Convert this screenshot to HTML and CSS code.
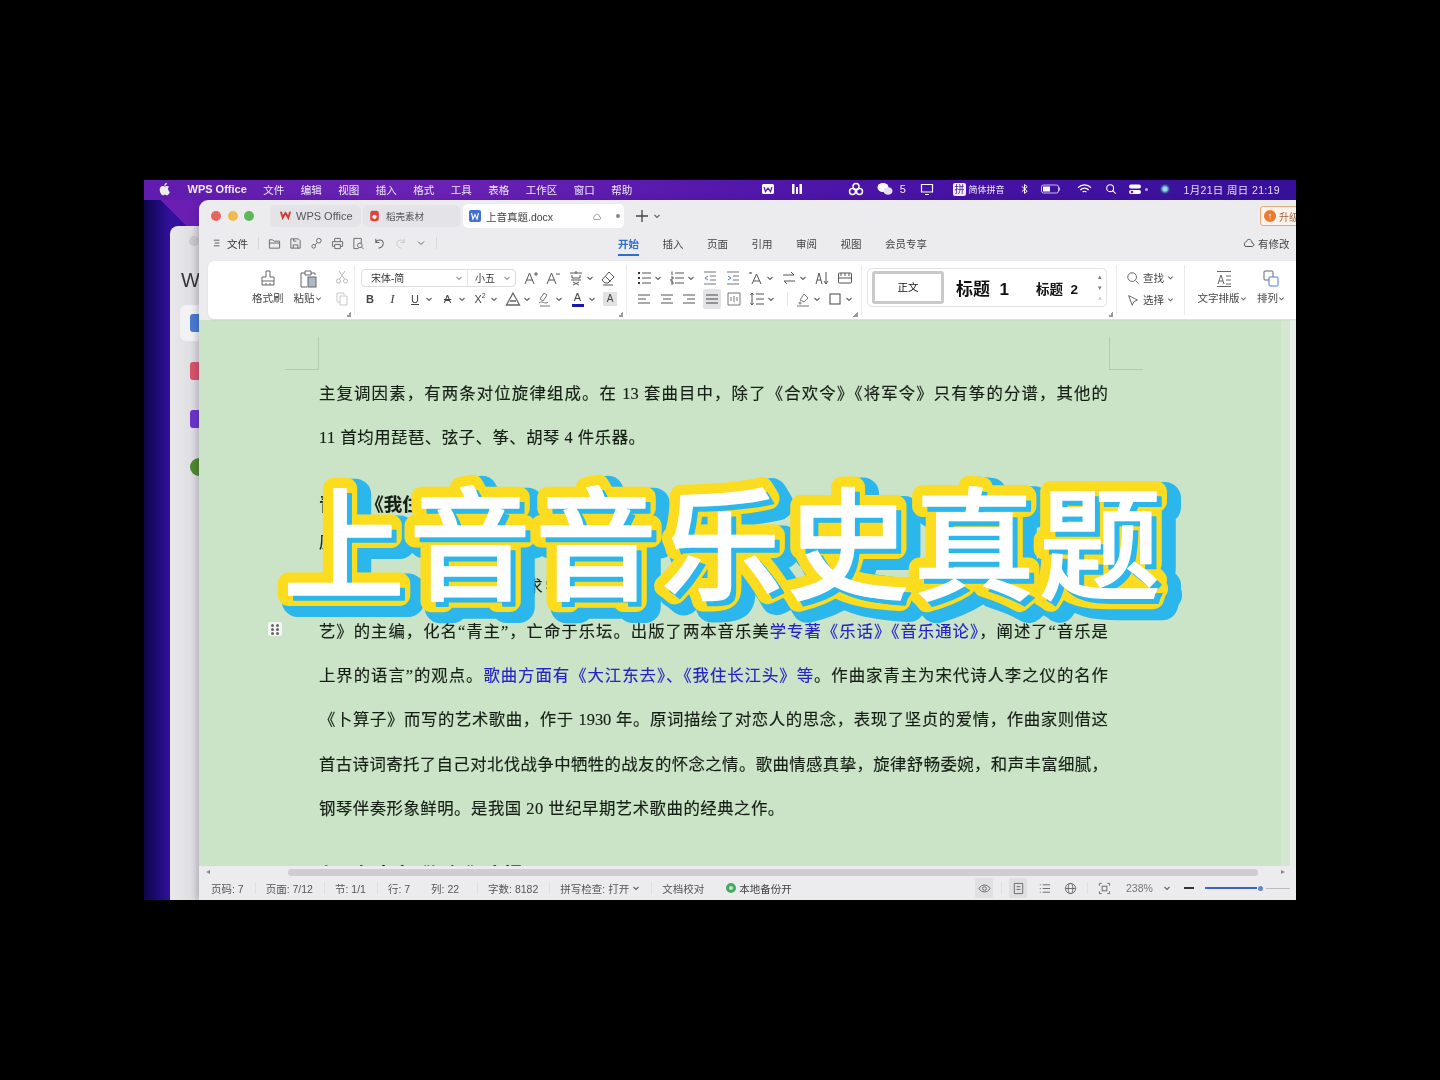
FILE: index.html
```html
<!DOCTYPE html>
<html lang="zh-CN">
<head>
<meta charset="utf-8">
<title>上音音乐史真题</title>
<link rel="stylesheet" href="styles.css">
</head>
<body>
<svg class="sprite" aria-hidden="true">
  <defs>
    <symbol id="caret" viewBox="0 0 8 8"><path d="M1.500 3 4 5.500 6.500 3" fill="none" stroke="currentColor" stroke-width="1.200"/></symbol>
    <text id="title-text" class="title-text" x="0" y="0">上音音乐史真题</text>
  </defs>
</svg>
<main class="screen">
  <div class="glow"></div>

  <header class="menubar">
    <svg class="apple" viewBox="0 0 14 16"><path d="M10.300 8.400c0-1.700 1.400-2.500 1.500-2.600-.8-1.200-2.100-1.400-2.500-1.400-1.100-.1-2.100.6-2.600.6s-1.400-.6-2.300-.6C3.200 4.400 2 5.100 1.400 6.200c-1.300 2.200-.3 5.500.9 7.300.6.900 1.300 1.900 2.300 1.800.9 0 1.300-.6 2.400-.6s1.400.6 2.400.6 1.600-.9 2.200-1.800c.7-1 1-2 1-2.100-.1 0-1.800-.7-1.800-3zM8.500 3.100c.5-.6.900-1.500.8-2.400-.8 0-1.700.5-2.300 1.200-.5.500-.9 1.400-.8 2.300.9 0 1.800-.5 2.300-1.100z" fill="currentColor"/></svg>
    <b class="m-app">WPS Office</b>
    <span>文件</span><span>编辑</span><span>视图</span><span>插入</span><span>格式</span><span>工具</span><span>表格</span><span>工作区</span><span>窗口</span><span>帮助</span>
    <svg class="mi m-w" viewBox="0 0 14 14"><rect x="1" y="2" width="12" height="10" rx="1.500" fill="#fff"/><path d="M3 5l1.500 4.500L7 6l2.500 3.500L11 5" fill="none" stroke="#5a22a8" stroke-width="1.300"/></svg>
    <svg class="mi m-m" viewBox="0 0 14 14"><path d="M2 2v10h2.500V2zM6 5v7h2V5zM9.500 2v10H12V2z" fill="#fff"/></svg>
    <svg class="mi m-b" viewBox="0 0 16 14"><g fill="none" stroke="#fff" stroke-width="1.500"><circle cx="8" cy="4.500" r="3"/><circle cx="4.500" cy="9.500" r="3"/><circle cx="11.500" cy="9.500" r="3"/></g></svg>
    <svg class="mi m-wx" viewBox="0 0 16 14"><ellipse cx="6" cy="5.500" rx="5.500" ry="4.500" fill="#fff"/><ellipse cx="11" cy="9" rx="4.500" ry="3.800" fill="#e6e0f5"/></svg>
    <span class="m-five">5</span>
    <svg class="mi m-mon" viewBox="0 0 14 14"><path d="M1.500 2.500h11v7.500h-11zM5 12.500h4" fill="none" stroke="#fff" stroke-width="1.200"/></svg>
    <span class="m-pin">拼</span><span class="m-ime">简体拼音</span>
    <svg class="mi m-bt" viewBox="0 0 10 14"><path d="M2 4l6 5.500L5 12V2l3 2.500L2 10" fill="none" stroke="#fff" stroke-width="1.100"/></svg>
    <svg class="mi m-bat" viewBox="0 0 20 12"><rect x=".5" y="2" width="17" height="8" rx="2" fill="none" stroke="#cbbde8"/><rect x="2" y="3.500" width="7" height="5" fill="#fff"/><path d="M18.500 4.500v3" stroke="#cbbde8"/></svg>
    <svg class="mi m-wifi" viewBox="0 0 16 12"><path d="M1 4.500c4-4 10-4 14 0M3.500 7c2.500-2.500 6.500-2.500 9 0M6 9.300c1-1 3-1 4 0" fill="none" stroke="#fff" stroke-width="1.400"/></svg>
    <svg class="mi m-s" viewBox="0 0 14 14"><circle cx="6" cy="6" r="4" fill="none" stroke="#fff" stroke-width="1.300"/><path d="M9 9l3.500 3.500" stroke="#fff" stroke-width="1.300"/></svg>
    <svg class="mi m-c" viewBox="0 0 14 14"><rect x="1" y="2.500" width="12" height="4" rx="2" fill="#fff"/><rect x="1" y="8" width="12" height="4" rx="2" fill="#fff"/><circle cx="4" cy="10" r="1.300" fill="#5a22a8"/></svg>
    <i class="m-dot"></i><i class="m-siri"></i>
    <span class="m-date">1月21日 周日 21:19</span>
  </header>

  <section class="back-window">
    <i class="back-light"></i>
    <div class="back-logo">W</div>
    <div class="back-item back-active"><i class="back-ic blue"></i></div>
    <div class="back-item"><i class="back-ic red"></i></div>
    <div class="back-item"><i class="back-ic violet"></i></div>
    <div class="back-item"><i class="back-ic green"></i></div>
  </section>

  <section class="window">
    <div class="titlebar">
      <i class="light red-l"></i><i class="light yel-l"></i><i class="light grn-l"></i>
      <div class="tab tab-wps">
        <svg class="tab-ic" viewBox="0 0 14 12"><path d="M1 1.500l2.800 9L7 4.500l3.200 6L13 1.500h-2.200l-.9 3.800L7 1 4.100 5.300 3.200 1.500z" fill="#d8352c"/></svg>
        <span>WPS Office</span>
      </div>
      <div class="tab tab-dk">
        <svg class="tab-ic" viewBox="0 0 12 14"><rect x="1" y="1" width="10" height="12" rx="2.500" fill="#e0453d"/><circle cx="6" cy="8" r="2.500" fill="#fff"/></svg>
        <span>稻壳素材</span>
      </div>
      <div class="tab tab-doc">
        <svg class="tab-ic w-doc" viewBox="0 0 12 12"><rect width="12" height="12" rx="2" fill="#3f6fd8"/><path d="M2.500 3l1.500 6L6 4.500 8 9l1.500-6" fill="none" stroke="#fff" stroke-width="1.100"/></svg>
        <span class="tab-name">上音真题.docx</span>
        <svg class="tab-cloud" viewBox="0 0 12 10"><path d="M3 8.500h6c2 0 2-3 0-3C9 2 5 1 4 4 2 3.500 1 8.500 3 8.500z" fill="none" stroke="#888"/></svg>
        <i class="tab-dot"></i>
      </div>
      <svg class="plus" viewBox="0 0 12 12"><path d="M6 0v12M0 6h12" stroke="#444" stroke-width="1.300"/></svg>
      <svg class="caret plus-c"><use href="#caret"/></svg>
      <div class="upgrade"><i class="up-ic">↑</i><span>升级</span></div>
    </div>

    <div class="toolbar">
      <svg class="q menu-ic" viewBox="0 0 10 10"><path d="M1 1.500h7M2 5h6M1 8.500h7" stroke="#444"/></svg>
      <span class="file">文件</span>
      <i class="q-sep"></i>
      <svg class="q" viewBox="0 0 14 14"><path d="M1.500 3v9h11V4.500H6.500L5 3zM1.500 6.500h11" fill="none" stroke="#666"/></svg>
      <svg class="q" viewBox="0 0 14 14"><path d="M2 2h8l2 2v8H2zM4.500 12V8.500h5V12M5 2v2.500h3" fill="none" stroke="#666"/></svg>
      <svg class="q" viewBox="0 0 14 14"><circle cx="4" cy="10" r="2" fill="none" stroke="#666"/><circle cx="9.500" cy="4" r="2.500" fill="none" stroke="#666"/><path d="M5.500 8.500 8 6" stroke="#666"/></svg>
      <svg class="q" viewBox="0 0 14 14"><path d="M4 5V1.500h6V5M4 10H1.500V5h11v5H10M4 8h6v4.500H4z" fill="none" stroke="#666"/></svg>
      <svg class="q" viewBox="0 0 14 14"><path d="M7 12.500H2v-11h8v5" fill="none" stroke="#666"/><circle cx="8.500" cy="9" r="2.500" fill="none" stroke="#666"/><path d="M10.500 11l2 2" stroke="#666"/></svg>
      <svg class="q" viewBox="0 0 14 14"><path d="M3 6C4 2.500 11 2 11 7c0 3-2.500 4.500-5 5M3 2v4h4" fill="none" stroke="#666" stroke-width="1.100"/></svg>
      <svg class="q" viewBox="0 0 14 14"><path d="M11 6C10 2.500 3 2 3 7c0 3 2.500 4.500 5 5M11 2v4H7" fill="none" stroke="#c8c8c8"/></svg>
      <svg class="q q-c" viewBox="0 0 8 8"><path d="M1 2.500 4 5.500 7 2.500" fill="none" stroke="#666"/></svg>
      <i class="q-sep end"></i>
      <nav class="ribbon-tabs">
        <span class="active">开始</span><span>插入</span><span>页面</span><span>引用</span><span>审阅</span><span>视图</span><span>会员专享</span>
      </nav>
      <div class="changed">
        <svg viewBox="0 0 12 12"><path d="M3 9.500h6c2.500 0 2.500-3.500 0-3.500C9 2 4.500 1 3.500 4.500 1 4.500 .5 9.500 3 9.500z" fill="none" stroke="#555"/></svg>
        <span>有修改</span>
      </div>
    </div>

    <div class="ribbon">
      <div class="rb rb-clip">
        <div class="big-btn">
          <svg viewBox="0 0 20 20"><path d="M8 2h4v6h4v8H4V8h4zM4 12h12M8 16v-2M12 16v-2" fill="none" stroke="#666"/></svg>
          <span>格式刷</span>
        </div>
        <div class="big-btn paste">
          <svg viewBox="0 0 20 20"><path d="M7 4H3v14h6M13 4h4v2M7 2h6v4H7z" fill="none" stroke="#666"/><rect x="10" y="8" width="8" height="10" fill="#aeb7c4" stroke="#666"/></svg>
          <span>粘贴<svg class="caret"><use href="#caret"/></svg></span>
        </div>
        <div class="clip-col">
          <svg class="ic" viewBox="0 0 16 16"><circle cx="4.500" cy="12" r="2" fill="none" stroke="#bbb"/><circle cx="11.500" cy="12" r="2" fill="none" stroke="#bbb"/><path d="M5.500 10 11 2M10.500 10 5 2" stroke="#bbb"/></svg>
          <svg class="ic" viewBox="0 0 16 16"><path d="M10 4V2H3v9h3M6 5h7v9H6z" fill="none" stroke="#c8c8c8"/></svg>
        </div>
        <i class="expander"></i>
      </div>

      <div class="rb rb-font">
        <div class="row first">
          <div class="combo">
            <div class="combo-font">宋体-简<svg class="caret"><use href="#caret"/></svg></div>
            <div class="combo-size">小五<svg class="caret"><use href="#caret"/></svg></div>
          </div>
          <span class="tool"><svg class="ic" viewBox="0 0 16 16"><path d="M2 14 6.500 3 11 14M3.800 10h5.500M11 4h4M13 2v4" fill="none" stroke="#555"/></svg></span>
          <span class="tool"><svg class="ic" viewBox="0 0 16 16"><path d="M2 14 6.500 3 11 14M3.800 10h5.500M11 4h4" fill="none" stroke="#555"/></svg></span>
          <span class="tool"><svg class="ic" viewBox="0 0 16 16"><path d="M2 3h12M8 1v3M4 5v3h8V5M3 10h10M5 12l6 3M11 12l-6 3" fill="none" stroke="#555"/></svg><svg class="caret"><use href="#caret"/></svg></span>
          <span class="tool"><svg class="ic" viewBox="0 0 16 16"><path d="M2 10 9 2l5 5-6 6H5zM5.500 6.500l5 5M3 15h10" fill="none" stroke="#555"/></svg></span>
        </div>
        <div class="row">
          <span class="tool"><b class="glyph">B</b></span>
          <span class="tool"><i class="glyph thin">I</i></span>
          <span class="tool"><span class="glyph under">U</span><svg class="caret"><use href="#caret"/></svg></span>
          <span class="tool"><span class="glyph strike">A</span><svg class="caret"><use href="#caret"/></svg></span>
          <span class="tool"><span class="glyph">X<sup>2</sup></span><svg class="caret"><use href="#caret"/></svg></span>
          <span class="tool"><svg class="ic" viewBox="0 0 16 16"><path d="M1.500 14 8 2l6.500 12zM5 10h6" fill="none" stroke="#666" stroke-width="1.300"/></svg><svg class="caret"><use href="#caret"/></svg></span>
          <span class="tool"><svg class="ic" viewBox="0 0 16 16"><path d="M3 8l4-6 3 2-4 6zM2 12c3-3 6 2 9-1M3 15h10" fill="none" stroke="#777"/></svg><svg class="caret"><use href="#caret"/></svg></span>
          <span class="tool"><span class="glyph color-a">A</span><svg class="caret"><use href="#caret"/></svg></span>
          <span class="tool"><span class="glyph shade">A</span></span>
        </div>
        <i class="expander"></i>
      </div>

      <div class="rb rb-para">
        <div class="row first para-top">
          <span class="tool"><svg class="ic" viewBox="0 0 16 16"><path d="M6 3h9M6 8h9M6 13h9" stroke="#555"/><path d="M2 3h2M2 8h2M2 13h2" stroke="#333" stroke-width="2"/></svg><svg class="caret"><use href="#caret"/></svg></span>
          <span class="tool"><svg class="ic" viewBox="0 0 16 16"><path d="M6 3h9M6 8h9M6 13h9M3 1.500V5M2 7h2v2H2v2h2M2 12h2v2H2" fill="none" stroke="#555"/></svg><svg class="caret"><use href="#caret"/></svg></span>
          <span class="tool"><svg class="ic" viewBox="0 0 16 16"><path d="M2 2h12M8 6h6M8 10h6M2 14h12" stroke="#777"/><path d="M6 6 3 8l3 2" fill="none" stroke="#4a7bd0"/></svg></span>
          <span class="tool"><svg class="ic" viewBox="0 0 16 16"><path d="M2 2h12M8 6h6M8 10h6M2 14h12" stroke="#777"/><path d="M3 6l3 2-3 2" fill="none" stroke="#4a7bd0"/></svg></span>
          <span class="tool"><svg class="ic" viewBox="0 0 16 16"><path d="M4 14 8.500 4 13 14M5.500 11h6M2 3h2M2 2v2" fill="none" stroke="#555"/></svg><svg class="caret"><use href="#caret"/></svg></span>
          <span class="tool"><svg class="ic" viewBox="0 0 16 16"><path d="M2 5h11l-3-3M14 11H3l3 3" fill="none" stroke="#555"/></svg><svg class="caret"><use href="#caret"/></svg></span>
          <span class="tool"><svg class="ic" viewBox="0 0 16 16"><path d="M2 14 5 3l3 11M3 10h4M12 2v12M10 11l2 3 2-3" fill="none" stroke="#555"/></svg></span>
          <span class="tool"><svg class="ic" viewBox="0 0 16 16"><rect x="1.500" y="3" width="13" height="10" rx="1" fill="none" stroke="#555"/><path d="M1.500 8h13M4 3v3M8 3v3M12 3v3" stroke="#555"/></svg></span>
        </div>
        <div class="row">
          <span class="tool"><svg class="ic" viewBox="0 0 16 16"><path d="M2 4h12M2 8h8M2 12h12" stroke="#555"/></svg></span>
          <span class="tool"><svg class="ic" viewBox="0 0 16 16"><path d="M2 4h12M4 8h8M2 12h12" stroke="#555"/></svg></span>
          <span class="tool"><svg class="ic" viewBox="0 0 16 16"><path d="M2 4h12M6 8h8M2 12h12" stroke="#555"/></svg></span>
          <span class="tool on"><svg class="ic" viewBox="0 0 16 16"><path d="M2 4h12M2 8h12M2 12h12" stroke="#444"/></svg></span>
          <span class="tool"><svg class="ic" viewBox="0 0 16 16"><path d="M2 2h12M2 14h12M2 2v12M14 2v12M5 6v4M8 5v6M11 6v4" fill="none" stroke="#777"/></svg></span>
          <span class="tool"><svg class="ic" viewBox="0 0 16 16"><path d="M7 3h8M7 8h8M7 13h8M3 2v12M1.500 4 3 2l1.500 2M1.500 12 3 14l1.500-2" fill="none" stroke="#555"/></svg><svg class="caret"><use href="#caret"/></svg></span>
          <i class="row-sep"></i>
          <span class="tool"><svg class="ic" viewBox="0 0 16 16"><path d="M5 9l4-6 4 4-4 4zM2 15h12" fill="none" stroke="#777"/><circle cx="5" cy="12" r="1.500" fill="#999"/></svg><svg class="caret"><use href="#caret"/></svg></span>
          <span class="tool"><svg class="ic" viewBox="0 0 16 16"><rect x="3" y="3" width="10" height="10" fill="none" stroke="#444"/></svg><svg class="caret"><use href="#caret"/></svg></span>
        </div>
        <i class="expander"></i>
      </div>

      <div class="rb rb-style">
        <div class="style-box">
          <div class="style-normal">正文</div>
          <div class="style-h1">标题&nbsp; 1</div>
          <div class="style-h2">标题&nbsp; 2</div>
          <div class="style-arrows"><i>▴</i><i>▾</i><i>⩡</i></div>
        </div>
        <i class="expander"></i>
      </div>

      <div class="rb rb-find">
        <span class="find-item"><svg class="ic" viewBox="0 0 16 16"><circle cx="7" cy="7" r="5" fill="none" stroke="#555"/><path d="M11 11l3.500 3.500" stroke="#555"/></svg>查找<svg class="caret"><use href="#caret"/></svg></span>
        <span class="find-item"><svg class="ic" viewBox="0 0 16 16"><path d="M3 3l4 11 2-4 4-2z" fill="none" stroke="#555"/></svg>选择<svg class="caret"><use href="#caret"/></svg></span>
      </div>

      <div class="rb rb-arrange">
        <div class="big-btn layout">
          <svg viewBox="0 0 20 20"><path d="M3 2.500h14M4 15 7 6l3 9M5 12h4M12 7h5M12 11h5M12 15h5M3 17.500h14" fill="none" stroke="#666"/></svg>
          <span>文字排版<svg class="caret"><use href="#caret"/></svg></span>
        </div>
        <div class="big-btn arrange">
          <svg viewBox="0 0 20 20"><rect x="3" y="2" width="9" height="9" rx="1" fill="none" stroke="#666"/><rect x="8" y="8" width="9" height="9" rx="1" fill="#fff" stroke="#4a7bd0"/></svg>
          <span>排列<svg class="caret"><use href="#caret"/></svg></span>
        </div>
      </div>
    </div>

    <div class="doc">
      <i class="crop crop-l"></i><i class="crop crop-r"></i>
      <div class="page">
        <p class="ln just">主复调因素，有两条对位旋律组成。在 13 套曲目中，除了《合欢令》《将军令》只有筝的分谱，其他的</p>
        <p class="ln">11 首均用琵琶、弦子、筝、胡琴 4 件乐器。</p>
        <h3 class="head">青主：《我住长江头》</h3>
        <p class="ln just">原词出自宋代词人李之仪的《卜算子》，曲作者青主，原名廖尚果，早年参加革命活动，</p>
        <p class="ln just">青主原名廖尚果，曾留德求学，回国后曾任上海国立音乐院教务主任，并担任音乐艺术杂志《乐</p>
        <p class="ln just">艺》的主编，化名“青主”，亡命于乐坛。出版了两本音乐美<span class="blue">学专著《乐话》《音乐通论》</span>，阐述了“音乐是</p>
        <p class="ln just">上界的语言”的观点。<span class="blue">歌曲方面有《大江东去》、《我住长江头》等</span>。作曲家青主为宋代诗人李之仪的名作</p>
        <p class="ln just">《卜算子》而写的艺术歌曲，作于 1930 年。原词描绘了对恋人的思念，表现了坚贞的爱情，作曲家则借这</p>
        <p class="ln just">首古诗词寄托了自己对北伐战争中牺牲的战友的怀念之情。歌曲情感真挚，旋律舒畅委婉，和声丰富细腻，</p>
        <p class="ln">钢琴伴奏形象鲜明。是我国 20 世纪早期艺术歌曲的经典之作。</p>
        <h3 class="head tail">七、何占豪《梁祝》小提琴</h3>
      </div>
      <div class="vscroll"></div>
      <div class="handle"><i></i><i></i><i></i><i></i><i></i><i></i></div>
    </div>

    <div class="hscroll">
      <i class="arrow-l"></i><div class="thumb"></div><i class="arrow-r"></i>
    </div>

    <footer class="status">
      <span>页码: 7</span><i class="s-sep"></i>
      <span>页面: 7/12</span><i class="s-sep"></i>
      <span>节: 1/1</span><i class="s-sep"></i>
      <span>行: 7</span><span class="s-col">列: 22</span><i class="s-sep wide"></i>
      <span>字数: 8182</span><i class="s-sep"></i>
      <span>拼写检查: 打开</span><svg class="caret s-caret"><use href="#caret"/></svg><i class="s-sep"></i>
      <span>文档校对</span><i class="s-sep clear"></i>
      <i class="s-dot"></i><span class="s-backup">本地备份开</span>
      <div class="s-right">
        <span class="v-btn on"><svg viewBox="0 0 14 14"><path d="M1 7c3-5 9-5 12 0-3 5-9 5-12 0z" fill="none" stroke="#666"/><circle cx="7" cy="7" r="2" fill="none" stroke="#666"/></svg></span>
        <i class="s-sep thin"></i>
        <span class="v-btn on"><svg viewBox="0 0 14 14"><path d="M2.500 1.500h9v11h-9zM5 5h4M5 8h4" fill="none" stroke="#666"/></svg></span>
        <span class="v-btn"><svg viewBox="0 0 14 14"><path d="M5 3h8M5 7h8M5 11h8M2 3h1M2 7h1M2 11h1" stroke="#666"/></svg></span>
        <span class="v-btn"><svg viewBox="0 0 14 14"><circle cx="7" cy="7" r="5.500" fill="none" stroke="#666"/><ellipse cx="7" cy="7" rx="2.500" ry="5.500" fill="none" stroke="#666"/><path d="M1.500 7h11" stroke="#666"/></svg></span>
        <i class="s-sep thin"></i>
        <span class="v-btn"><svg viewBox="0 0 14 14"><path d="M1.500 4V1.500H4M10 1.500h2.500V4M12.500 10v2.500H10M4 12.500H1.500V10" fill="none" stroke="#666"/><rect x="4.500" y="4.500" width="5" height="5" fill="none" stroke="#666"/></svg></span>
        <span class="zoom-val">238%</span>
        <svg class="caret z-caret"><use href="#caret"/></svg>
        <i class="minus"></i>
        <div class="slider"><i class="fill"></i><i class="knob"></i><i class="rest"></i></div>
      </div>
    </footer>
  </section>

  <svg class="title-art" viewBox="0 0 1000 180" role="img" aria-label="上音音乐史真题">
    <use href="#title-text" class="t-outer" x="9" y="131"/>
    <use href="#title-text" class="t-yellow" x="0" y="125"/>
    <use href="#title-text" class="t-shadow" x="5" y="130"/>
    <use href="#title-text" class="t-white" x="0" y="125"/>
  </svg>
</main>
</body>
</html>
```

FILE: styles.css
```css
* { box-sizing: border-box; }
html, body { margin: 0; background: #000; }
body {
  width: 1440px;
  height: 1080px;
  padding: 180px 144px;
  overflow: hidden;
  font-family: "Liberation Sans", "Noto Sans CJK SC", sans-serif;
}
.sprite { position: absolute; width: 0; height: 0; }
i { font-style: normal; display: block; }
svg { display: block; flex: none; }

.screen {
  position: relative;
  width: 1152px;
  height: 720px;
  overflow: hidden;
  filter: blur(.45px);
  background: linear-gradient(90deg, #0e0648 0, #1d0b78 14px, #34109c 26px, #3a12a4 60px);
}
.glow {
  position: absolute;
  left: 14px;
  top: 20px;
  width: 50px;
  height: 46px;
  background: linear-gradient(225deg, #6b1fb2 50%, transparent 50%);
}

/* macOS menu bar */
.menubar {
  position: relative;
  height: 20px;
  display: flex;
  align-items: center;
  padding: 0 0 2px 15px;
  gap: 16.5px;
  color: #f1ebfb;
  font-size: 10.5px;
  background: linear-gradient(90deg, #5f1cae 0, #6a22b4 25%, #4c14a8 60%, #36109a 100%);
}
.menubar span, .m-app { white-space: nowrap; }
.apple { width: 12px; height: 14px; color: #eee; }
.m-app { font-size: 11px; flex: none; }
.mi { width: 14px; height: 14px; }
.menubar .m-w { margin-left: 112px; }
.menubar .m-m { margin-left: -1px; }
.menubar .m-b { margin-left: 27px; width: 16px; }
.menubar .m-wx { margin-left: -3px; width: 16px; }
.menubar .m-five { margin-left: -10px; font-size: 11px; }
.menubar .m-mon { margin-left: -2px; }
.menubar .m-pin { margin-left: 2px; background: #f3eefb; color: #4a18a2; font-size: 10px; width: 13px; height: 13px; line-height: 13px; text-align: center; border-radius: 2px; }
.menubar .m-ime { margin-left: -14px; font-size: 9px; }
.menubar .m-bt { margin-left: -1px; width: 9px; }
.menubar .m-bat { margin-left: -4px; width: 20px; }
.menubar .m-wifi { margin-left: -1px; width: 15px; }
.menubar .m-s { margin-left: -3px; width: 12px; }
.menubar .m-c { margin-left: -6px; }
.m-dot { width: 3px; height: 3px; margin-left: -13px; border-radius: 50%; background: #b9a6e8; }
.m-siri { width: 10px; height: 10px; margin-left: -5px; border-radius: 50%; background: radial-gradient(circle, #8fe0e8 0 25%, #3a3f9a 60%, #302080); }
.menubar .m-date { margin-left: -3px; font-size: 10.5px; letter-spacing: .35px; color: #e6dcf6; }

/* back window, behind the document window */
.back-window {
  position: absolute;
  left: 26px;
  top: 46px;
  width: 200px;
  bottom: 0;
  padding: 10px 10px 0;
  border-radius: 8px 0 0 0;
  background: linear-gradient(90deg, #e9e8ea, #dcdbdf 28px);
}
.back-light { width: 10px; height: 10px; margin-left: 9px; border-radius: 50%; background: #c9c9cb; }
.back-logo { margin: 22px 0 13px 1px; font-size: 20px; line-height: 24px; color: #333; }
.back-item { height: 36px; margin-bottom: 12px; padding: 9px 0 0 10px; border-radius: 6px 0 0 6px; }
.back-active { background: #f2f2f4; }
.back-ic { width: 18px; height: 18px; border-radius: 3px; }
.blue { color: #2323c8; }
.back-ic.blue { background: #4a7ad2; }
.back-ic.red { background: #d8526a; }
.back-ic.violet { background: #6a35c8; }
.back-ic.green { background: #4d8a2a; border-radius: 50%; }

/* document window */
.window {
  position: absolute;
  left: 55px;
  top: 20px;
  width: 1097px;
  height: 700px;
  display: flex;
  flex-direction: column;
  border-radius: 9px 0 0 0;
  background: #ecebee;
  color: #444;
  font-size: 10.5px;
  box-shadow: -2px 0 6px rgba(40, 30, 70, .25);
}
.titlebar {
  height: 32px;
  flex: none;
  display: flex;
  align-items: center;
  padding-left: 12px;
}
.titlebar > * { flex: none; }
.light { width: 10px; height: 10px; margin-right: 6.500px; border-radius: 50%; }
.red-l { background: #e8645c; }
.yel-l { background: #eebc4c; }
.grn-l { background: #5cb85c; margin-right: 0; }
.tab {
  height: 22px;
  display: flex;
  align-items: center;
  border-radius: 5px;
  font-size: 11px;
  color: #555;
}
.tab-ic { width: 13px; height: 12px; }
.tab-wps { width: 91px; margin-left: 16px; padding-left: 9px; gap: 4px; background: #e4e3e7; }
.tab-dk { width: 97px; margin-left: 2px; padding-left: 5px; gap: 5px; background: #e4e3e7; font-size: 9.500px; }
.tab-doc { width: 161px; height: 24px; margin-left: 3px; padding-left: 6px; gap: 5px; background: #fff; color: #444; font-size: 10.5px; }
.tab-name { width: 101px; }
.tab-cloud { width: 10px; height: 9px; }
.tab-dot { width: 4px; height: 4px; margin-left: 9px; border-radius: 50%; background: #888; }
.w-doc { width: 12px; }
.plus { width: 12px; height: 12px; margin-left: 12px; }
.caret { width: 8px; height: 8px; color: #666; }
.plus-c { margin-left: 5px; }
.upgrade {
  display: flex;
  align-items: center;
  gap: 3px;
  height: 20px;
  width: 70px;
  margin-left: 599px;
  padding-left: 3px;
  border: 1px solid #e8a77c;
  border-radius: 3px;
  background: #fdf3ec;
  color: #a2643c;
  font-size: 10px;
}
.up-ic { width: 12px; height: 12px; line-height: 12px; text-align: center; border-radius: 50%; background: #ec7a2e; color: #fff; font-size: 9px; font-weight: 700; }

.toolbar {
  height: 29px;
  flex: none;
  display: flex;
  align-items: center;
  padding: 0 0 7px 14px;
  font-size: 10.5px;
}
.q { width: 13px; height: 13px; margin-right: 8px; }
.menu-ic { width: 8px; height: 8px; margin-right: 6px; }
.q-c { width: 8px; height: 8px; margin-left: 2px; }
.file { color: #333; font-size: 10.5px; }
.q-sep { width: 1px; height: 12px; margin: 0 9px 0 10px; background: #d8d7da; }
.q-sep.end { margin: 0 0 0 3px; }
.ribbon-tabs {
  display: flex;
  gap: 23.5px;
  margin-left: 181px;
}
.ribbon-tabs span { position: relative; color: #444; white-space: nowrap; }
.ribbon-tabs .active { color: #2f6fd0; font-weight: 700; }
.ribbon-tabs .active::after {
  content: "";
  position: absolute;
  left: 0;
  right: 0;
  bottom: -5px;
  height: 2px;
  background: #2f6fd0;
}
.changed { display: flex; align-items: center; gap: 3px; margin-left: 316px; }
.changed svg { width: 12px; height: 12px; }

.ribbon {
  height: 58px;
  flex: none;
  margin-left: 9px;
  display: flex;
  background: #fff;
  border-radius: 6px 0 0 6px;
  box-shadow: 0 1px 2px rgba(0, 0, 0, .08);
  position: relative;
  z-index: 1;
}
.rb {
  position: relative;
  flex: none;
  height: 100%;
}
.rb + .rb::before {
  content: "";
  position: absolute;
  left: 0;
  top: 4px;
  bottom: 4px;
  width: 1px;
  background: #eaeaec;
}
.expander {
  position: absolute;
  right: 3px;
  bottom: 2px;
  width: 5px;
  height: 5px;
  background: linear-gradient(135deg, transparent 50%, #999 50%);
}
.ic { width: 16px; height: 16px; }
.rb-clip { width: 146px; display: flex; padding-left: 44px; }
.big-btn {
  display: flex;
  flex-direction: column;
  align-items: center;
  padding-top: 8px;
  gap: 2px;
  color: #444;
  font-size: 10.5px;
  white-space: nowrap;
}
.big-btn > svg { width: 20px; height: 20px; }
.big-btn span { display: flex; align-items: center; line-height: 14px; }
.big-btn .caret { width: 7px; height: 7px; }
.paste { margin-left: 10px; }
.clip-col { display: flex; flex-direction: column; gap: 6px; margin-left: 12px; padding-top: 8px; }

.rb-font { width: 272px; padding: 8px 0 0 8px; }
.row { display: flex; align-items: center; height: 16px; gap: 6.5px; }
.row.first { height: 17px; margin-bottom: 5px; gap: 6.5px; }
.tool { display: flex; align-items: center; gap: 2px; height: 16px; position: relative; }
.tool .caret { width: 8px; height: 8px; }
.tool.on::before {
  content: "";
  position: absolute;
  inset: -2px -1px;
  border-radius: 2px;
  background: #e3e3e5;
}
.tool.on .ic { position: relative; }
.combo {
  width: 155px;
  height: 18px;
  display: flex;
  border: 1px solid #dcdcde;
  border-radius: 4px;
  margin-left: -1px;
  font-size: 10px;
  color: #333;
}
.combo > div { display: flex; align-items: center; justify-content: space-between; padding: 0 4px 0 9px; }
.combo .caret { color: #999; }
.combo-font { width: 106px; border-right: 1px solid #e6e6e8; }
.combo-size { flex: 1; padding-left: 7px !important; }
.glyph {
  display: block;
  width: 16px;
  text-align: center;
  line-height: 16px;
  font-size: 11px;
  color: #444;
  text-decoration: none;
}
.glyph sup { font-size: 7px; line-height: 0; }
.thin { font-family: "Liberation Serif", serif; font-style: italic; font-size: 13px; }
.under { text-decoration: underline; }
.strike { text-decoration: line-through; }
.color-a { position: relative; line-height: 13px; height: 16px; }
.color-a::after { content: ""; position: absolute; left: 2px; right: 2px; bottom: 0; height: 3px; background: #1717b0; }
.shade { width: 14px; height: 14px; line-height: 14px; margin-left: 1px; background: #e2e2e4; font-size: 10px; }

.rb-para { width: 235px; padding: 8px 0 0 10px; }
.para-top { gap: 7px !important; }
.row-sep { width: 1px; height: 14px; margin-left: 6px; background: #e4e4e6; }

.rb-style { width: 255px; padding: 7px 0 0 6px; }
.style-box {
  width: 240px;
  height: 39px;
  display: flex;
  align-items: center;
  padding-left: 4px;
  border: 1px solid #e2e2e4;
  border-radius: 5px;
  color: #111;
  position: relative;
}
.style-normal {
  width: 72px;
  height: 33px;
  line-height: 27px;
  text-align: center;
  border: 3px solid #c9c9cb;
  border-radius: 3px;
  font-size: 10.5px;
  font-family: "Liberation Serif", "Noto Sans CJK SC", serif;
}
.style-h1 { margin-left: 12px; font-size: 17px; font-weight: 700; white-space: nowrap; color: #111; }
.style-h2 { margin-left: 27px; font-size: 13.500px; font-weight: 700; white-space: nowrap; color: #111; }
.style-arrows {
  position: absolute;
  right: 2px;
  top: 2px;
  width: 8px;
  display: flex;
  flex-direction: column;
  align-items: center;
  font-size: 7px;
  line-height: 11px;
  color: #777;
}

.rb-find {
  width: 68px;
  padding: 9px 0 0 10px;
  display: flex;
  flex-direction: column;
  gap: 7px;
}
.find-item { display: flex; align-items: center; gap: 3px; height: 15px; white-space: nowrap; color: #444; }
.find-item .ic { width: 14px; height: 14px; }
.find-item .caret { width: 7px; height: 7px; }

.rb-arrange { flex: 1; display: flex; padding-left: 12px; gap: 8px; }
.layout { width: 52px; }
.arrange { width: 30px; }
.layout > svg { margin-left: 4px; }

.doc {
  flex: 1;
  min-height: 0;
  position: relative;
  overflow: hidden;
  display: flex;
  margin-top: 1px;
  background: #cbe3c7;
}
.page {
  flex: none;
  width: 789px;
  margin-left: 120px;
  padding-top: 52px;
  font-family: "Liberation Serif", "Noto Sans CJK SC", serif;
  font-size: 16.400px;
  color: #161f16;
  -webkit-text-stroke: .15px currentColor;
}
.ln { margin: 0; line-height: 44.4px; height: 44.4px; white-space: nowrap; letter-spacing: .5px; }
.ln.just { letter-spacing: 0; white-space: normal; overflow: hidden; text-align: justify; text-align-last: justify; text-justify: inter-character; }
.head { margin: 28px 0 0; height: 32px; line-height: 32px; font-size: 18.500px; font-weight: 700; white-space: nowrap; }
.head.tail { margin-top: 27px; }
.vscroll { position: absolute; right: 0; top: 0; bottom: 0; width: 15px; background: linear-gradient(90deg, #d5e7d2 0 9px, #e8efe6 9px); }
.crop { position: absolute; width: 34px; height: 33px; top: 17px; }
.crop-l { left: 86px; border-right: 1px solid #b4c9b0; border-bottom: 1px solid #b4c9b0; }
.crop-r { left: 910px; border-left: 1px solid #b4c9b0; border-bottom: 1px solid #b4c9b0; }
.handle {
  position: absolute;
  left: 69px;
  top: 302px;
  width: 14px;
  height: 14px;
  display: grid;
  grid-template-columns: repeat(2, 3px);
  gap: 1px 2px;
  justify-content: center;
  align-content: center;
  background: #f3f6f2;
  border-radius: 2px;
}
.handle i { width: 3px; height: 3px; border-radius: 50%; background: #666; }

.hscroll {
  height: 12px;
  flex: none;
  position: relative;
  background: #ecebee;
  display: flex;
  align-items: center;
  padding-left: 89px;
}
.thumb { width: 970px; height: 7px; border-radius: 3px; background: #cfcdd1; }
.arrow-l, .arrow-r { position: absolute; top: 4px; width: 0; height: 0; border-top: 2.5px solid transparent; border-bottom: 2.5px solid transparent; }
.arrow-l { left: 7px; border-right: 4px solid #888; }
.arrow-r { left: 1082px; border-left: 4px solid #888; }

.status {
  height: 22px;
  flex: none;
  display: flex;
  align-items: center;
  padding: 0 0 2px 12px;
  font-size: 10.5px;
  color: #555;
  white-space: nowrap;
}
.s-sep { width: 1px; height: 12px; margin: 0 10px 0 11px; background: #e0dfe2; }
.s-sep.wide { margin-left: 18px; }
.s-sep.clear { background: transparent; margin-right: 10px; }
.s-sep.thin { margin: 0 7px 0 0; }
.s-col { margin-left: 21px; }
.s-caret { margin-left: 3px; width: 8px; height: 8px; }
.s-dot { width: 10px; height: 10px; margin: 0 3px 0 0; border: 3px solid #4aa862; border-radius: 50%; background: #bfe6c8; }
.s-backup { color: #444; }
.s-right { margin-left: auto; display: flex; align-items: center; padding-right: 6px; }
.v-btn { width: 18px; height: 20px; display: flex; align-items: center; justify-content: center; margin-right: 8px; }
.v-btn.on { background: #e0dfe2; border-radius: 2px; }
.v-btn svg { width: 13px; height: 13px; }
.zoom-val { margin-left: 5px; color: #777; width: 30px; }
.z-caret { margin-left: 7px; }
.minus { width: 10px; height: 2px; margin-left: 13px; background: #333; }
.slider { width: 85px; margin-left: 11px; display: flex; align-items: center; }
.slider .fill { width: 52px; height: 2px; background: #3f62c8; }
.slider .knob { width: 5px; height: 5px; margin-left: 1px; border-radius: 50%; background: #6a86c4; }
.slider .rest { flex: 1; height: 1px; margin-left: 3px; background: #bbb; }

/* caption over the recording */
.title-art {
  position: absolute;
  left: 139px;
  top: 285px;
  width: 1000px;
  height: 180px;
  overflow: visible;
}
.title-text {
  font-family: "Noto Sans CJK SC", sans-serif;
  font-size: 122px;
  font-weight: 500;
  letter-spacing: 4px;
  stroke-linejoin: round;
  stroke-linecap: round;
}
.t-outer { fill: #2bb7ec; stroke: #2bb7ec; stroke-width: 32px; stroke-linejoin: round; }
.t-yellow { fill: #fbdc1e; stroke: #fbdc1e; stroke-width: 22px; stroke-linejoin: round; }
.t-shadow { fill: #2bb7ec; stroke: #2bb7ec; stroke-width: 1.500px; }
.t-white { fill: #fff; stroke: #fff; stroke-width: 1.500px; }
```
